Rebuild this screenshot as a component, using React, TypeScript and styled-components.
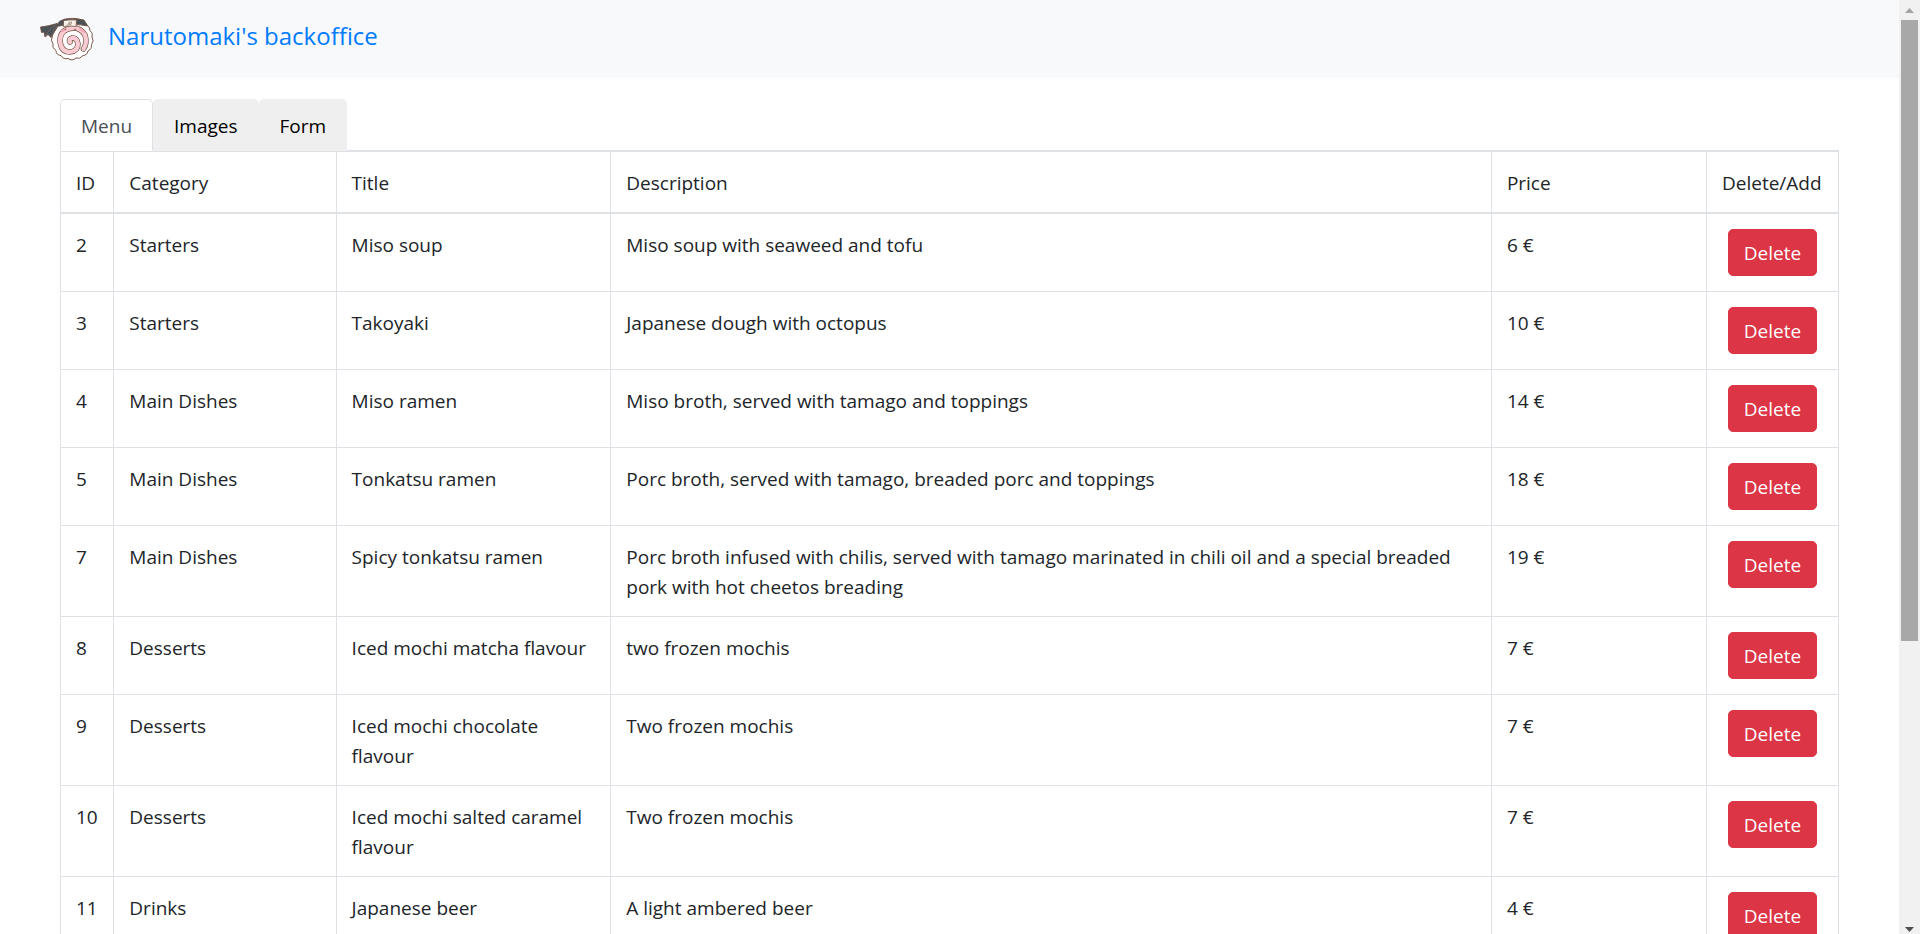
import React, { useState } from "react";
import styled, { createGlobalStyle } from "styled-components";

const border = "#dee2e6";

const GlobalStyle = createGlobalStyle`
  *, *::before, *::after { box-sizing: border-box; }
  body {
    margin: 0;
    background: #fff;
    color: #212529;
    font-family: "Segoe UI", "Open Sans", "Noto Sans", sans-serif;
    font-size: 19px;
    line-height: 30px;
  }
  button { font: inherit; cursor: pointer; }
`;

const Shell = styled.div`
  display: flex;
  height: 100vh;
  overflow: hidden;
`;

const Page = styled.div`
  flex: 1;
  min-width: 0;
  overflow: hidden;
`;

const Navbar = styled.header`
  display: flex;
  align-items: center;
  height: 78px;
  padding: 0 40px;
  background: #f8f9fa;
`;

const Brand = styled.a`
  display: flex;
  gap: 14px;
  color: #007bff;
  font-size: 24px;
  line-height: 38px;
  text-decoration: none;
`;

const Logo = styled.svg`
  display: block;
  width: 54px;
  height: 44px;
`;

const Content = styled.main`
  padding: 21px 60px 0;
`;

const Tabs = styled.div`
  display: flex;
  border-bottom: 1px solid ${border};
`;

const Tab = styled.button<{ $active: boolean }>`
  margin-bottom: -1px;
  padding: 11px 20px 9px;
  border: 1px solid transparent;
  border-radius: 5px 5px 0 0;
  background: ${(p) => (p.$active ? "#fff" : "#efefef")};
  border-color: ${(p) => (p.$active ? `${border} ${border} #fff` : "transparent")};
  color: ${(p) => (p.$active ? "#495057" : "#000")};
`;

const Table = styled.table`
  width: 100%;
  border-collapse: collapse;
  table-layout: fixed;
  border: 1px solid ${border};
`;

const Col = styled.col<{ $width?: string }>`
  width: ${(p) => p.$width ?? "auto"};
`;

const HeadCell = styled.th`
  padding: 16px 15px 14px;
  border: 1px solid ${border};
  border-bottom-width: 2px;
  font-weight: 400;
  text-align: left;
  white-space: nowrap;
`;

const Cell = styled.td`
  padding: 16px 15px 14px;
  border: 1px solid ${border};
  vertical-align: top;
`;

const ActionCell = styled(Cell)`
  padding: 15px;
`;

const DeleteButton = styled.button`
  display: block;
  margin: 0 auto;
  padding: 9px 15px 7px;
  border: 1px solid #dc3545;
  border-radius: 5px;
  background: #dc3545;
  color: #fff;
  line-height: 29px;
`;

const ScrollTrack = styled.div`
  display: flex;
  flex-direction: column;
  flex: none;
  width: 21px;
  background: #f1f1f1;
`;

const ScrollArrow = styled.svg`
  display: block;
  width: 21px;
  height: 20px;
`;

const ScrollLane = styled.div`
  flex: 1;
  padding: 0 2px;
`;

const ScrollThumb = styled.div`
  height: 69.5%;
  background: #a8a8a8;
`;

const tabs = ["Menu", "Images", "Form"];

const dishes = [
  { id: 2, category: "Starters", title: "Miso soup", description: "Miso soup with seaweed and tofu", price: 6 },
  { id: 3, category: "Starters", title: "Takoyaki", description: "Japanese dough with octopus", price: 10 },
  { id: 4, category: "Main Dishes", title: "Miso ramen", description: "Miso broth, served with tamago and toppings", price: 14 },
  { id: 5, category: "Main Dishes", title: "Tonkatsu ramen", description: "Porc broth, served with tamago, breaded porc and toppings", price: 18 },
  { id: 7, category: "Main Dishes", title: "Spicy tonkatsu ramen", description: "Porc broth infused with chilis, served with tamago marinated in chili oil and a special breaded pork with hot cheetos breading", price: 19 },
  { id: 8, category: "Desserts", title: "Iced mochi matcha flavour", description: "two frozen mochis", price: 7 },
  { id: 9, category: "Desserts", title: "Iced mochi chocolate flavour", description: "Two frozen mochis", price: 7 },
  { id: 10, category: "Desserts", title: "Iced mochi salted caramel flavour", description: "Two frozen mochis", price: 7 },
  { id: 11, category: "Drinks", title: "Japanese beer", description: "A light ambered beer", price: 4 },
];

const spiral =
  "M43.5 32Q47.500 26 45 18Q41 11 33 11Q20 12 20 24Q21 35 30 35Q38 34 38 27Q37 20.500 32 21Q28.500 22 30 25";

function NarutomakiLogo() {
  return (
    <Logo viewBox="0 0 54 44" fill="none" strokeLinecap="round" strokeLinejoin="round" aria-hidden="true">
      <path
        d="M19 7C23 2 29 1 35 1.500C41 2 45 4 47 8Q50 10 50 13.500Q53.500 16 52 20Q54.500 24 51.500 27.500Q52 32 48 34Q47 38.500 43 38.500Q40 42.500 36 41Q32 44.500 28 41.500Q23 42.500 21 38.500Q16 38 16 33.500Q11.500 31 13 27Q10 23 12.500 19.500Q11.500 15 15 12.500Q15.500 9 19 7Z"
        fill="#fffdfd" stroke="#7a5a4c" strokeWidth="1"
      />
      <path d={spiral} stroke="#7a5a4c" strokeWidth="5.600" />
      <path d={spiral} stroke="#f9ccd3" strokeWidth="4.200" />
      <path d="M22 14L26 12M40 12L44 15" stroke="#f7a6b8" strokeWidth="2" />
      <path d="M25 12.500h0.500M34 12.500Q35 13.500 36 12.500" stroke="#6b4a3e" strokeWidth="0.800" />
      <path d="M20 4L25 2L37 2L44 3L47.500 9Q34 6 16 9.500Z" fill="#4b5257" stroke="#6b4a3e" strokeWidth="0.800" />
      <path d="M17 6.500Q9 9 0.500 10L1.500 15.500L4 15L5 20L8 17.500L11 20.500Q15 14 18 9Z" fill="#4b5257" stroke="#6b4a3e" strokeWidth="0.800" />
      <path d="M16 8Q9 12 5 19M17 9Q13 13 11 20" stroke="#7a6a64" strokeWidth="0.800" />
      <path d="M24 3.500Q30 2.500 36.500 3L36 9.500Q30 8.500 23.500 9.500Z" fill="#f7f1e9" stroke="#7a5a4c" strokeWidth="0.800" />
      <path d="M27 8L31 7.500L31.500 5Q28.500 4.500 28.500 6.500L30 6.500" stroke="#8a7468" strokeWidth="0.700" />
    </Logo>
  );
}

export default function App() {
  const [active, setActive] = useState("Menu");

  return (
    <>
      <GlobalStyle />
      <Shell>
        <Page>
          <Navbar>
            <Brand href="#">
              <NarutomakiLogo />
              Narutomaki's backoffice
            </Brand>
          </Navbar>
          <Content>
            <Tabs role="tablist">
              {tabs.map((name) => (
                <Tab
                  key={name}
                  type="button"
                  role="tab"
                  aria-selected={active === name}
                  $active={active === name}
                  onClick={() => setActive(name)}
                >
                  {name}
                </Tab>
              ))}
            </Tabs>
            <Table>
              <colgroup>
                <Col $width="3%" />
                <Col $width="12.5%" />
                <Col $width="15.45%" />
                <Col />
                <Col $width="12.1%" />
                <Col $width="132px" />
              </colgroup>
              <thead>
                <tr>
                  {["ID", "Category", "Title", "Description", "Price", "Delete/Add"].map((label) => (
                    <HeadCell key={label} scope="col">{label}</HeadCell>
                  ))}
                </tr>
              </thead>
              <tbody>
                {dishes.map((dish) => (
                  <tr key={dish.id}>
                    <Cell>{dish.id}</Cell>
                    <Cell>{dish.category}</Cell>
                    <Cell>{dish.title}</Cell>
                    <Cell>{dish.description}</Cell>
                    <Cell>{`${dish.price} €`}</Cell>
                    <ActionCell>
                      <DeleteButton type="button">Delete</DeleteButton>
                    </ActionCell>
                  </tr>
                ))}
              </tbody>
            </Table>
          </Content>
        </Page>
        <ScrollTrack aria-hidden="true">
          <ScrollArrow viewBox="0 0 21 20"><path d="M6 13L10.500 8L15 13Z" fill="#a3a3a3" /></ScrollArrow>
          <ScrollLane><ScrollThumb /></ScrollLane>
          <ScrollArrow viewBox="0 0 21 20"><path d="M6 13L15 13L10.500 18Z" fill="#505050" /></ScrollArrow>
        </ScrollTrack>
      </Shell>
    </>
  );
}
